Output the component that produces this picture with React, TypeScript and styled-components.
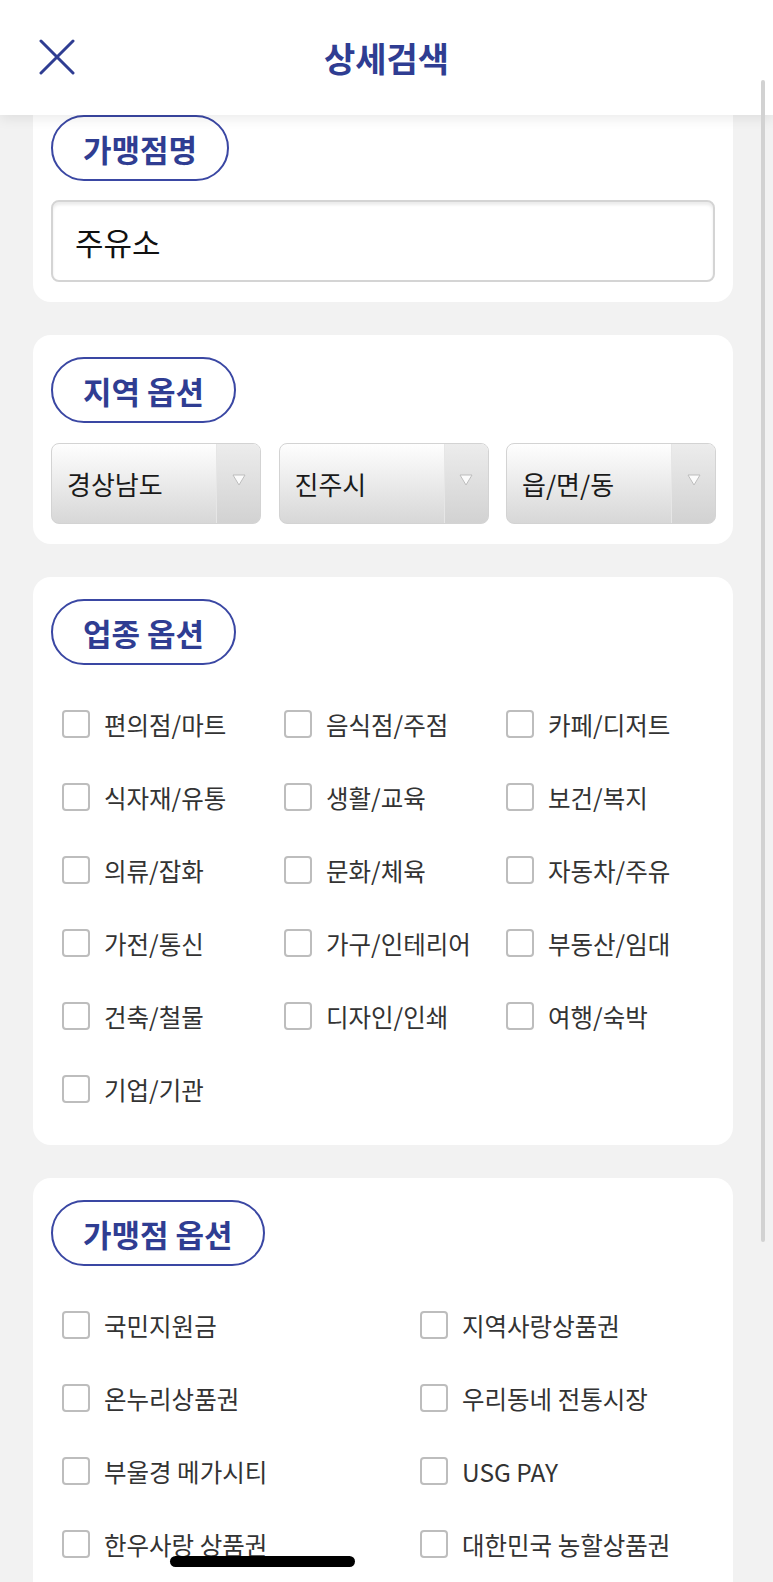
import styled, { createGlobalStyle } from 'styled-components'

const GlobalStyle = createGlobalStyle`
  html, body {
    margin: 0;
    padding: 0;
    background: #f2f2f2;
    font-family: "Noto Sans CJK KR", "Noto Sans", sans-serif;
  }
  body {
    width: 773px;
    height: 1582px;
    overflow: hidden;
  }
`

const brand = '#2f3d92'

const categories = [
  '편의점/마트', '음식점/주점', '카페/디저트',
  '식자재/유통', '생활/교육', '보건/복지',
  '의류/잡화', '문화/체육', '자동차/주유',
  '가전/통신', '가구/인테리어', '부동산/임대',
  '건축/철물', '디자인/인쇄', '여행/숙박',
  '기업/기관',
]

const shopOptions = [
  '국민지원금', '지역사랑상품권',
  '온누리상품권', '우리동네 전통시장',
  '부울경 메가시티', 'USG PAY',
  '한우사랑 상품권', '대한민국 농할상품권',
]

const regions = ['경상남도', '진주시', '읍/면/동']

function App() {
  return (
    <Page>
      <GlobalStyle />
      <Header>
        <CloseButton aria-label="닫기">
          <svg width="36" height="36" viewBox="0 0 36 36">
            <path d="M2 2 L34 34 M34 2 L2 34" stroke={brand} strokeWidth="3" strokeLinecap="round" />
          </svg>
        </CloseButton>
        <Title>상세검색</Title>
      </Header>
      <ScrollBar />

      <Content>
        <Card>
          <Pill>가맹점명</Pill>
          <TextInput defaultValue="주유소" />
        </Card>

        <Card>
          <Pill>지역 옵션</Pill>
          <SelectRow>
            {regions.map((r) => (
              <Select key={r}>
                <SelectLabel>{r}</SelectLabel>
                <SelectArrow>
                  <svg width="14" height="12" viewBox="0 0 14 12">
                    <path d="M1 1 L13 1 L7 11 Z" fill="#fbfbfb" stroke="#bdbdbd" strokeWidth="1" />
                  </svg>
                </SelectArrow>
              </Select>
            ))}
          </SelectRow>
        </Card>

        <Card $bottom={42}>
          <Pill>업종 옵션</Pill>
          <CheckGrid $cols="222px 222px 1fr">
            {categories.map((c) => (
              <CheckItem key={c}>
                <Box />
                <CheckLabel>{c}</CheckLabel>
              </CheckItem>
            ))}
          </CheckGrid>
        </Card>

        <Card $bottom={42}>
          <Pill>가맹점 옵션</Pill>
          <CheckGrid $cols="358px 1fr">
            {shopOptions.map((c) => (
              <CheckItem key={c}>
                <Box />
                <CheckLabel>{c}</CheckLabel>
              </CheckItem>
            ))}
          </CheckGrid>
        </Card>
      </Content>

      <HomeIndicator />
    </Page>
  )
}

const Page = styled.div`
  position: relative;
  width: 773px;
  height: 1582px;
  overflow: hidden;
  background: #f2f2f2;
`

const Header = styled.header`
  position: absolute;
  top: 0;
  left: 0;
  right: 0;
  height: 115px;
  background: #ffffff;
  display: flex;
  align-items: center;
  justify-content: center;
  box-shadow: 0 4px 12px rgba(0, 0, 0, 0.08);
  z-index: 10;
`

const CloseButton = styled.button`
  position: absolute;
  left: 39px;
  top: 39px;
  width: 36px;
  height: 36px;
  padding: 0;
  border: none;
  background: none;
  display: flex;
`

const Title = styled.h1`
  margin: 0 0 0 0;
  font-size: 34px;
  font-weight: 700;
  color: ${brand};
  line-height: 1;
`

const ScrollBar = styled.div`
  position: absolute;
  top: 80px;
  left: 761px;
  width: 4px;
  height: 1162px;
  border-radius: 2px;
  background: #d2d2d2;
  z-index: 11;
`

const Content = styled.main`
  padding: 93px 40px 0 33px;
  display: flex;
  flex-direction: column;
  gap: 33px;
`

const Card = styled.section<{ $bottom?: number }>`
  width: 700px;
  box-sizing: border-box;
  background: #ffffff;
  border-radius: 18px;
  padding: 22px 18px ${(p) => p.$bottom ?? 20}px;
  display: flex;
  flex-direction: column;
  align-items: flex-start;
`

const Pill = styled.div`
  height: 66px;
  box-sizing: border-box;
  padding: 0 30px;
  border: 2px solid #3a47a3;
  border-radius: 33px;
  display: flex;
  align-items: center;
  font-size: 31px;
  font-weight: 700;
  color: ${brand};
  margin-bottom: 19px;
`

const TextInput = styled.input`
  width: 664px;
  height: 82px;
  box-sizing: border-box;
  border: 2px solid #d4d4d4;
  border-radius: 8px;
  box-shadow: inset 0 3px 3px rgba(0, 0, 0, 0.08);
  padding: 0 22px;
  font-family: "Noto Sans CJK KR", sans-serif;
  font-size: 31px;
  color: #111;
  outline: none;
`

const SelectRow = styled.div`
  width: 665px;
  display: grid;
  grid-template-columns: repeat(3, 210px);
  justify-content: space-between;
  margin-top: 1px;
`

const Select = styled.div`
  height: 81px;
  box-sizing: border-box;
  border: 1px solid #d3d3d3;
  border-radius: 8px;
  background: linear-gradient(#fefefe, #d7d7d7);
  display: flex;
  align-items: center;
  overflow: hidden;
`

const SelectLabel = styled.span`
  flex: 1;
  padding-left: 15px;
  font-size: 26px;
  color: #1a1a1a;
`

const SelectArrow = styled.span`
  width: 44px;
  align-self: stretch;
  border-left: 1px solid #e6e6e6;
  background: linear-gradient(#ececec, #d2d2d2);
  display: flex;
  align-items: center;
  justify-content: center;
  padding-bottom: 8px;
  box-sizing: border-box;
`

const CheckGrid = styled.div`
  width: 653px;
  margin: 26px 0 0 11px;
  display: grid;
  grid-template-columns: ${(p: { $cols: string }) => p.$cols};
  row-gap: 45px;
`

const CheckItem = styled.label`
  display: flex;
  align-items: center;
  height: 28px;
`

const Box = styled.span`
  width: 28px;
  height: 28px;
  box-sizing: border-box;
  border: 2px solid #bdbdbd;
  border-radius: 4px;
  background: #fff;
  flex-shrink: 0;
`

const CheckLabel = styled.span`
  margin-left: 14px;
  font-size: 24.5px;
  color: #333;
  white-space: nowrap;
`

const HomeIndicator = styled.div`
  position: absolute;
  left: 170px;
  top: 1556px;
  width: 185px;
  height: 11px;
  border-radius: 6px;
  background: #000;
  z-index: 12;
`

export default App
